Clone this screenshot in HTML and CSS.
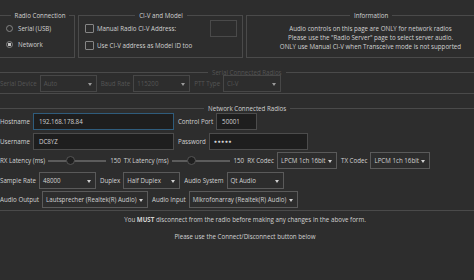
FILE: index.html
```html
<!DOCTYPE html>
<html lang="en">
<head>
<meta charset="UTF-8">
<title>Radio Settings</title>
<link rel="stylesheet" href="styles.css">
</head>
<body>
<div class="page">

  <div class="top">
    <fieldset class="grp g-radio">
      <legend>Radio Connection</legend>
      <div class="opt"><span class="radio"></span>Serial (USB)</div>
      <div class="opt"><span class="radio on"></span>Network</div>
    </fieldset>

    <fieldset class="grp g-civ">
      <legend>CI-V and Model</legend>
      <div class="civ-row"><span class="check"></span>Manual Radio CI-V Address:<span class="civ-input"></span></div>
      <div class="opt opt-check"><span class="check"></span>Use CI-V address as Model ID too</div>
    </fieldset>

    <fieldset class="grp g-info">
      <legend>Information</legend>
      <p>Audio controls on this page are ONLY for network radios</p>
      <p>Please use the "Radio Server" page to select server audio.</p>
      <p>ONLY use Manual CI-V when Transceive mode is not supported</p>
    </fieldset>
  </div>

  <fieldset class="grp wide serial disabled">
    <legend>Serial Connected Radios</legend>
    <div class="row">
      <span class="lbl">Serial Device</span>
      <span class="combo w57">Auto</span>
      <span class="lbl">Baud Rate</span>
      <span class="combo w57">115200</span>
      <span class="lbl">PTT Type</span>
      <span class="combo w58">CI-V</span>
    </div>
  </fieldset>

  <fieldset class="grp wide network">
    <legend>Network Connected Radios</legend>
    <div class="rows">
      <div class="row">
        <span class="lbl">Hostname</span>
        <span class="edit w141 focus">192.168.178.84</span>
        <span class="lbl">Control Port</span>
        <span class="edit w41">50001</span>
      </div>
      <div class="row">
        <span class="lbl">Username</span>
        <span class="edit w141">DC8YZ</span>
        <span class="lbl">Password</span>
        <span class="edit w99 pass">●●●●●</span>
      </div>
      <div class="row">
        <span class="lbl">RX Latency (ms)</span>
        <span class="slider"><span class="handle" style="left: 30%"></span></span>
        <span class="lbl">150</span>
        <span class="lbl">TX Latency (ms)</span>
        <span class="slider"><span class="handle" style="left: 27%"></span></span>
        <span class="lbl">150</span>
        <span class="lbl">RX Codec</span>
        <span class="combo w60">LPCM 1ch 16bit</span>
        <span class="lbl">TX Codec</span>
        <span class="combo w60">LPCM 1ch 16bit</span>
      </div>
      <div class="row">
        <span class="lbl">Sample Rate</span>
        <span class="combo w57">48000</span>
        <span class="lbl">Duplex</span>
        <span class="combo w57">Half Duplex</span>
        <span class="lbl">Audio System</span>
        <span class="combo w57">Qt Audio</span>
      </div>
      <div class="row">
        <span class="lbl">Audio Output</span>
        <span class="combo w106">Lautsprecher (Realtek(R) Audio)</span>
        <span class="lbl">Audio Input</span>
        <span class="combo w109">Mikrofonarray (Realtek(R) Audio)</span>
      </div>
    </div>
  </fieldset>

  <p class="note">You <b>MUST</b> disconnect from the radio before making any changes in the above form.</p>
  <p class="note second">Please use the Connect/Disconnect button below</p>

</div>
</body>
</html>
```

FILE: styles.css
```css
body {
  margin: 0;
  background: #2d2d2d;
  overflow: hidden;
  font-family: 'Open Sans', 'Noto Sans', sans-serif;
  font-size: 6.2px;
  line-height: 9px;
  color: #d2d2d2;
}
p { margin: 0; }

.page { padding-top: 11px; }

/* Group boxes (the window is cut on both sides, so outer edges have no border) */
.grp {
  margin: 0;
  padding: 0;
  min-width: 0;
  border: 1px solid #4a4a4a;
  box-sizing: border-box;
}
.grp legend {
  margin: 0 auto;
  padding: 0 4px;
  line-height: 9px;
}

.top {
  display: flex;
  gap: 3px;
}
.g-radio { width: 75px; height: 47px; padding-left: 6px; border-left: none; }
.g-civ { width: 165px; height: 47px; padding: 0 5px 0 6px; }
.g-info {
  flex: 1;
  height: 47px;
  padding: 4px 0 0 20px;
  border-right: none;
  text-align: center;
}
.g-info legend { margin-left: 83px; }

.opt {
  display: flex;
  align-items: center;
  gap: 5px;
  height: 16px;
}
.opt-check { gap: 3px; }
.radio {
  width: 7px; height: 7px;
  border: 1px solid #858585;
  border-radius: 50%;
  box-sizing: border-box;
}
.radio.on { background: radial-gradient(circle, #c4c4c4 0 1.4px, transparent 1.9px); }
.check {
  width: 9px; height: 9px;
  border: 1px solid #858585;
  border-radius: 1px;
  box-sizing: border-box;
}
.civ-row {
  display: flex;
  align-items: center;
  gap: 3px;
  height: 17px;
}
.civ-input {
  width: 27px; height: 17px;
  margin-left: auto;
  border: 1px solid #4a4a4a;
  box-sizing: border-box;
}

/* Rows of fields */
.wide { border-left: none; border-right: none; }
.serial { margin-top: 10px; padding-bottom: 1px; }
.serial legend { margin-left: 208px; }
.serial .row { margin-top: -2px; }
.network { margin-top: 10px; padding-bottom: 2px; }
.network legend { margin-left: 204px; }
.rows {
  display: flex;
  flex-direction: column;
  gap: 2.5px;
}
.row {
  display: flex;
  align-items: center;
  height: 17px;
}
.lbl { margin-right: 3px; white-space: nowrap; }
.combo, .edit, .slider {
  position: relative;
  height: 17px;
  margin-right: 4px;
  box-sizing: border-box;
  white-space: nowrap;
  overflow: hidden;
  display: flex;
  align-items: center;
  flex-shrink: 0;
}
.combo {
  border: 1px solid #5a5a5a;
  padding-left: 3px;
}
.combo::after {
  content: "";
  position: absolute;
  right: 4px; top: 7px;
  border-left: 2px solid transparent;
  border-right: 2px solid transparent;
  border-top: 3px solid #d0d0d0;
}
.edit {
  background: #1e1e1e;
  border: 1px solid #4c4c4c;
  padding-left: 5px;
}
.edit.focus { border-color: #2f5c7c; }
.pass { font-size: 5px; letter-spacing: 0.6px; padding-left: 4px; }

.slider { width: 58px; overflow: visible; }
.slider::before {
  content: "";
  width: 100%;
  height: 2px;
  background: #5c5c5c;
}
.handle {
  position: absolute;
  top: 4px;
  width: 9px; height: 9px;
  border-radius: 50%;
  background: #1f1f1f;
  border: 1px solid #555;
  box-sizing: border-box;
}

.w41 { width: 41px; }
.w57 { width: 57px; }
.w58 { width: 58px; }
.w60 { width: 60px; }
.w99 { width: 99px; }
.w106 { width: 106px; }
.w109 { width: 109px; }
.w141 { width: 141px; }

.disabled { color: #555; }
.disabled .combo { border-color: #474747; }
.disabled .combo::after { border-top-color: #9a9a9a; }

.note { text-align: center; margin-top: 4px; padding-left: 16px; }
.note.second { margin-top: 8px; }
```
